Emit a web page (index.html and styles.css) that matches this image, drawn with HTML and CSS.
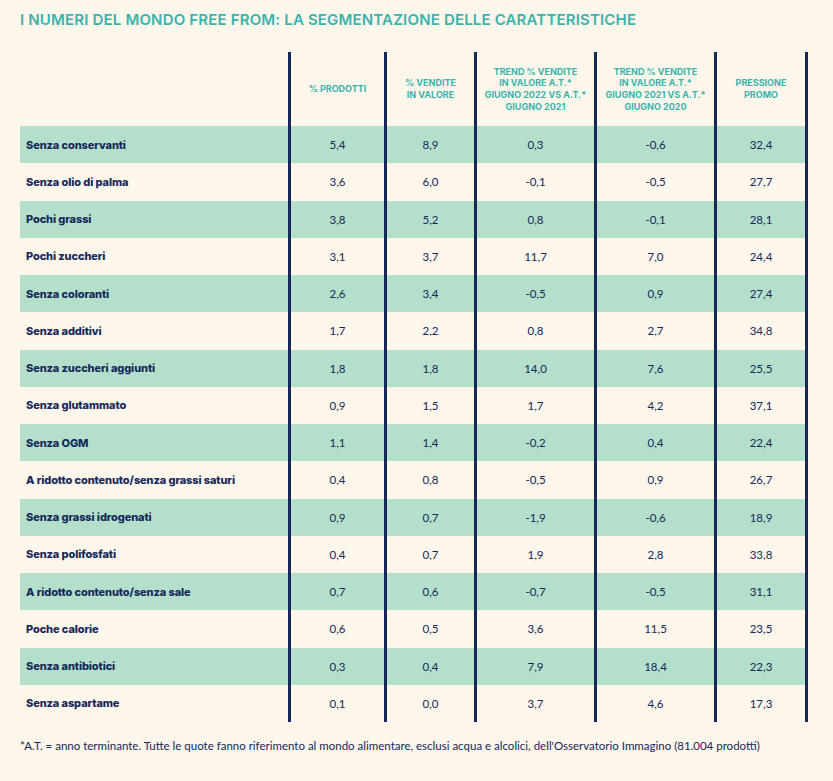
FILE: index.html
```html
<!DOCTYPE html>
<html lang="it">
<head>
<meta charset="utf-8">
<title>Free From</title>
<link rel="stylesheet" href="styles.css">
</head>
<body>
<div class="page">
  <h1 class="title">I NUMERI DEL MONDO FREE FROM: LA SEGMENTAZIONE DELLE CARATTERISTICHE</h1>
  <div class="table">
    <div class="row head">
      <div class="cell lab"></div>
      <div class="cell">% PRODOTTI</div>
      <div class="cell">% VENDITE<br>IN VALORE</div>
      <div class="cell">TREND % VENDITE<br>IN VALORE A.T.*<br>GIUGNO 2022 VS A.T.*<br>GIUGNO 2021</div>
      <div class="cell">TREND % VENDITE<br>IN VALORE A.T.*<br>GIUGNO 2021 VS A.T.*<br>GIUGNO 2020</div>
      <div class="cell last">PRESSIONE<br>PROMO</div>
    </div>
    <div class="row band"><div class="cell lab">Senza conservanti</div><div class="cell">5,4</div><div class="cell">8,9</div><div class="cell">0,3</div><div class="cell">-0,6</div><div class="cell last">32,4</div></div>
    <div class="row"><div class="cell lab">Senza olio di palma</div><div class="cell">3,6</div><div class="cell">6,0</div><div class="cell">-0,1</div><div class="cell">-0,5</div><div class="cell last">27,7</div></div>
    <div class="row band"><div class="cell lab">Pochi grassi</div><div class="cell">3,8</div><div class="cell">5,2</div><div class="cell">0,8</div><div class="cell">-0,1</div><div class="cell last">28,1</div></div>
    <div class="row"><div class="cell lab">Pochi zuccheri</div><div class="cell">3,1</div><div class="cell">3,7</div><div class="cell">11,7</div><div class="cell">7,0</div><div class="cell last">24,4</div></div>
    <div class="row band"><div class="cell lab">Senza coloranti</div><div class="cell">2,6</div><div class="cell">3,4</div><div class="cell">-0,5</div><div class="cell">0,9</div><div class="cell last">27,4</div></div>
    <div class="row"><div class="cell lab">Senza additivi</div><div class="cell">1,7</div><div class="cell">2,2</div><div class="cell">0,8</div><div class="cell">2,7</div><div class="cell last">34,8</div></div>
    <div class="row band"><div class="cell lab">Senza zuccheri aggiunti</div><div class="cell">1,8</div><div class="cell">1,8</div><div class="cell">14,0</div><div class="cell">7,6</div><div class="cell last">25,5</div></div>
    <div class="row"><div class="cell lab">Senza glutammato</div><div class="cell">0,9</div><div class="cell">1,5</div><div class="cell">1,7</div><div class="cell">4,2</div><div class="cell last">37,1</div></div>
    <div class="row band"><div class="cell lab">Senza OGM</div><div class="cell">1,1</div><div class="cell">1,4</div><div class="cell">-0,2</div><div class="cell">0,4</div><div class="cell last">22,4</div></div>
    <div class="row"><div class="cell lab">A ridotto contenuto/senza grassi saturi</div><div class="cell">0,4</div><div class="cell">0,8</div><div class="cell">-0,5</div><div class="cell">0,9</div><div class="cell last">26,7</div></div>
    <div class="row band"><div class="cell lab">Senza grassi idrogenati</div><div class="cell">0,9</div><div class="cell">0,7</div><div class="cell">-1,9</div><div class="cell">-0,6</div><div class="cell last">18,9</div></div>
    <div class="row"><div class="cell lab">Senza polifosfati</div><div class="cell">0,4</div><div class="cell">0,7</div><div class="cell">1,9</div><div class="cell">2,8</div><div class="cell last">33,8</div></div>
    <div class="row band"><div class="cell lab">A ridotto contenuto/senza sale</div><div class="cell">0,7</div><div class="cell">0,6</div><div class="cell">-0,7</div><div class="cell">-0,5</div><div class="cell last">31,1</div></div>
    <div class="row"><div class="cell lab">Poche calorie</div><div class="cell">0,6</div><div class="cell">0,5</div><div class="cell">3,6</div><div class="cell">11,5</div><div class="cell last">23,5</div></div>
    <div class="row band"><div class="cell lab">Senza antibiotici</div><div class="cell">0,3</div><div class="cell">0,4</div><div class="cell">7,9</div><div class="cell">18,4</div><div class="cell last">22,3</div></div>
    <div class="row"><div class="cell lab">Senza aspartame</div><div class="cell">0,1</div><div class="cell">0,0</div><div class="cell">3,7</div><div class="cell">4,6</div><div class="cell last">17,3</div></div>
  </div>
  <p class="note">*A.T. = anno terminante. Tutte le quote fanno riferimento al mondo alimentare, esclusi acqua e alcolici, dell'Osservatorio Immagino (81.004 prodotti)</p>
</div>
</body>
</html>
```
FILE: styles.css
```css
html, body {
  margin: 0;
  padding: 0;
  background: #fdf6ea;
}
.page {
  width: 833px;
  height: 781px;
  box-sizing: border-box;
  padding: 11px 0 0 20px;
  font-family: "Lato", "Liberation Sans", sans-serif;
  color: #17275a;
}
.title {
  margin: 0;
  height: 18px;
  line-height: 18px;
  font-family: "Inter", "Liberation Sans", sans-serif;
  font-weight: 600;
  font-size: 15px;
  color: #3bb3ad;
  letter-spacing: 0.17px;
  white-space: nowrap;
}
.table {
  margin-top: 23px;
  width: 788px;
}
.row {
  display: grid;
  grid-template-columns: 268px 96px 90px 120px 120px 94px;
  height: 37.25px;
}
.row.band {
  background: #b3dfcb;
}
.row.head {
  height: 74px;
}
.cell {
  box-sizing: border-box;
  border-left: 3px solid #17275a;
  display: flex;
  align-items: center;
  justify-content: center;
  text-align: center;
  font-size: 11.5px;
}
.cell.last {
  border-right: 3px solid #17275a;
}
.cell.lab {
  border-left: none;
  justify-content: flex-start;
  padding-left: 6px;
  font-family: "Inter", "Liberation Sans", sans-serif;
  font-weight: 800;
  font-size: 11px;
  letter-spacing: -0.1px;
}
.head .cell {
  font-family: "Inter", "Liberation Sans", sans-serif;
  font-weight: 700;
  font-size: 9px;
  line-height: 11.7px;
  color: #3bb3ad;
}
.note {
  margin: 17px 0 0 0;
  font-size: 11.5px;
  line-height: 14px;
  color: #17275a;
}
```
